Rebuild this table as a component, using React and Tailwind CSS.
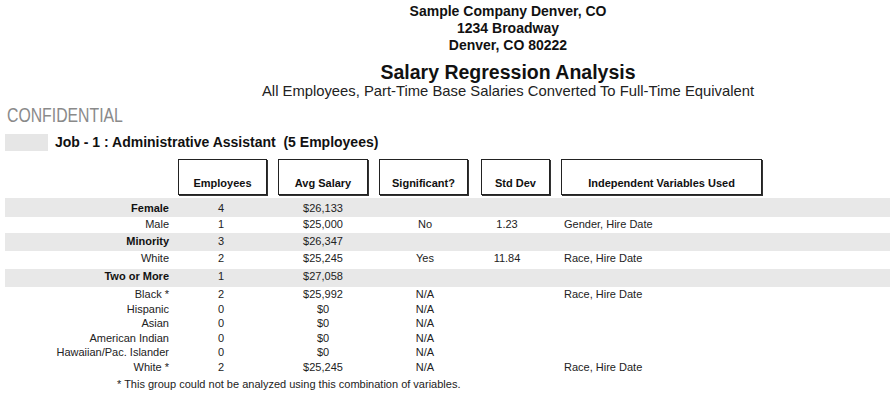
import React from 'react';

const headers = [
  { label: 'Employees', ml: 'ml-[173px]', w: 'w-[89px]' },
  { label: 'Avg Salary', ml: 'ml-[11px]', w: 'w-[90px]' },
  { label: 'Significant?', ml: 'ml-[11px]', w: 'w-[89px]' },
  { label: 'Std Dev', ml: 'ml-[13px]', w: 'w-[69px]' },
  { label: 'Independent Variables Used', ml: 'ml-[11px]', w: 'w-[201px]' },
];

// h / pt are per-row so the bands land where the printed report has them
const rows = [
  { label: 'Female', bold: true, band: true, emp: '4', avg: '$26,133', h: 'h-[19px]', pt: 'pt-[3px]' },
  { label: 'Male', emp: '1', avg: '$25,000', sig: 'No', std: '1.23', vars: 'Gender, Hire Date', h: 'h-[16px]', pt: 'pt-0' },
  { label: 'Minority', bold: true, band: true, emp: '3', avg: '$26,347', h: 'h-[18px]', pt: 'pt-[1px]' },
  { label: 'White', emp: '2', avg: '$25,245', sig: 'Yes', std: '11.84', vars: 'Race, Hire Date', h: 'h-[18px]', pt: 'pt-0' },
  { label: 'Two or More', bold: true, band: true, emp: '1', avg: '$27,058', h: 'h-[18px]', pt: 'pt-0' },
  { label: 'Black *', emp: '2', avg: '$25,992', sig: 'N/A', vars: 'Race, Hire Date', h: 'h-[14.5px]', pt: 'pt-0' },
  { label: 'Hispanic', emp: '0', avg: '$0', sig: 'N/A', h: 'h-[14.5px]', pt: 'pt-0' },
  { label: 'Asian', emp: '0', avg: '$0', sig: 'N/A', h: 'h-[14.5px]', pt: 'pt-0' },
  { label: 'American Indian', emp: '0', avg: '$0', sig: 'N/A', h: 'h-[14.5px]', pt: 'pt-0' },
  { label: 'Hawaiian/Pac. Islander', emp: '0', avg: '$0', sig: 'N/A', h: 'h-[14.5px]', pt: 'pt-0' },
  { label: 'White *', emp: '2', avg: '$25,245', sig: 'N/A', vars: 'Race, Hire Date', h: 'h-[14.5px]', pt: 'pt-0' },
];

const Row = ({ r }) => (
  <div className={`flex items-start ${r.h} ${r.pt} ${r.band ? 'bg-[#e8e8e8]' : ''} text-[11px] leading-[14px] text-[#222]`}>
    <div className={`w-[164px] text-right ${r.bold ? 'font-bold text-[#111]' : ''}`}>{r.label}</div>
    <div className="w-[104px] text-center">{r.emp}</div>
    <div className="w-[100px] text-center">{r.avg}</div>
    <div className="w-[104px] text-center">{r.sig}</div>
    <div className="w-[60px] text-center">{r.std}</div>
    <div className="pl-[27px]">{r.vars}</div>
  </div>
);

export default function App() {
  return (
    <div className="w-[895px] h-[394px] bg-white overflow-hidden font-['Liberation_Sans',Arial,sans-serif] text-[#111]">
      {/* report heading */}
      <div className="pl-[121px] text-center">
        <div className="pt-[3px] text-[14px] leading-[17px] font-bold">
          <div>Sample Company Denver, CO</div>
          <div>1234 Broadway</div>
          <div>Denver, CO 80222</div>
        </div>
        <div className="mt-[7px] text-[19.5px] leading-[22px] font-bold">Salary Regression Analysis</div>
        <div className="text-[14.8px] leading-[17px] text-[#222]">
          All Employees, Part-Time Base Salaries Converted To Full-Time Equivalent
        </div>
      </div>

      <div className="mt-[4px] pl-[7px] h-[22px] leading-[22px]">
        <span className="inline-block origin-left scale-x-[0.79] text-[20px] text-[#8a8a8a]">CONFIDENTIAL</span>
      </div>

      <div className="ml-[5px] w-[885px]">
        <div className="flex items-center mt-[8px] h-[17px]">
          <div className="w-[43px] h-[17px] bg-[#e6e6e6]" />
          <div className="ml-[7px] text-[14px] font-bold whitespace-pre">Job - 1 : Administrative Assistant  (5 Employees)</div>
        </div>

        <div className="flex mt-[8px]">
          {headers.map((h) => (
            <div
              key={h.label}
              className={`${h.ml} ${h.w} h-[36px] border border-[#222] shadow-[1px_1px_0_#333] flex items-end justify-center pb-[4px] text-[11px] leading-[14px] font-bold`}
            >
              {h.label}
            </div>
          ))}
        </div>

        <div className="mt-[3px]">
          {rows.map((r, i) => (
            <Row key={i} r={r} />
          ))}
        </div>

        <div className="mt-[3px] pl-[112px] text-[11px] leading-[14px] text-[#222]">
          * This group could not be analyzed using this combination of variables.
        </div>
      </div>
    </div>
  );
}
